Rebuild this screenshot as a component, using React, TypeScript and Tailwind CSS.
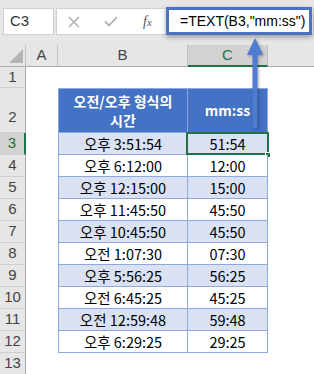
import React from "react";

const data: [string, string][] = [
  ["오후 3:51:54", "51:54"],
  ["오후 6:12:00", "12:00"],
  ["오후 12:15:00", "15:00"],
  ["오후 11:45:50", "45:50"],
  ["오후 10:45:50", "45:50"],
  ["오전 1:07:30", "07:30"],
  ["오후 5:56:25", "56:25"],
  ["오전 6:45:25", "45:25"],
  ["오전 12:59:48", "59:48"],
  ["오후 6:29:25", "29:25"],
];

const cellFont = { fontFamily: '"Noto Sans CJK KR", "Noto Sans", sans-serif' };

function RowHead({ n, sel }: { n: number; sel?: boolean }) {
  return (
    <div
      className={
        "flex items-center justify-center border-b border-[#cfcfcf] text-[15px] " +
        (sel
          ? "bg-[#d2d2d2] text-[#1e7145] border-r-2 border-r-[#217346]"
          : "bg-[#e6e6e6] text-[#444] border-r border-r-[#ababab]")
      }
      style={{ fontFamily: '"Liberation Sans", Arial, sans-serif' }}
    >
      {n}
    </div>
  );
}

export default function App() {
  return (
    <div
      className="relative w-[314px] h-[374px] overflow-hidden bg-[#e6e6e6]"
      style={{ fontFamily: '"Liberation Sans", Arial, sans-serif' }}
    >
      {/* formula bar */}
      <div className="flex h-[45px] items-start pt-[8px] pl-[3px] gap-[2px]">
        <div className="w-[51px] h-[27px] bg-white border border-[#d0d0d0] flex items-center pl-[6px] text-[15px] text-[#333]">
          C3
        </div>
        <div className="flex-1 h-[27px] bg-white border border-[#d0d0d0] flex items-center pl-[11px] gap-[24px]">
          <svg width="12" height="12" viewBox="0 0 12 12">
            <path d="M1 1 L11 11 M11 1 L1 11" stroke="#b0b0b0" strokeWidth="1.5" fill="none" />
          </svg>
          <svg width="14" height="11" viewBox="0 0 14 11">
            <path d="M1 5.5 L5 9.5 L13 1" stroke="#b0b0b0" strokeWidth="1.8" fill="none" />
          </svg>
          <span
            className="text-[14px] italic text-[#555] ml-[1px]"
            style={{ fontFamily: '"Liberation Serif", "Times New Roman", serif' }}
          >
            f<span className="text-[11px]">x</span>
          </span>
        </div>
      </div>

      {/* sheet */}
      <div className="grid grid-cols-[26px_32px_130px_80px_1fr] grid-rows-[22px_21px_45px_repeat(11,22px)] bg-white">
        {/* column header row */}
        <div className="relative bg-[#e6e6e6] border-r border-[#c0c0c0] border-b border-b-[#ababab]">
          <svg className="absolute left-[9px] top-[4px]" width="14" height="14" viewBox="0 0 14 14">
            <path d="M0 14 L14 14 L14 0 Z" fill="#b5b5b5" />
          </svg>
        </div>
        <div className="bg-[#e6e6e6] border-r border-[#c0c0c0] border-b border-b-[#ababab] flex items-center justify-center text-[15px] text-[#444]">
          A
        </div>
        <div className="bg-[#e6e6e6] border-r border-[#c0c0c0] border-b border-b-[#ababab] flex items-center justify-center text-[15px] text-[#444]">
          B
        </div>
        <div className="bg-[#d2d2d2] border-r border-[#c0c0c0] border-b-2 border-b-[#217346] flex items-center justify-center text-[15px] text-[#1e7145]">
          C
        </div>
        <div className="bg-[#e6e6e6] border-b border-b-[#ababab]" />

        {/* row 1 */}
        <RowHead n={1} />
        <div />
        <div />
        <div />
        <div />

        {/* row 2 header */}
        <div className="bg-[#e6e6e6] border-b border-[#cfcfcf] border-r border-r-[#ababab] flex items-end justify-center pb-[4px] text-[15px] text-[#444]">
          2
        </div>
        <div />
        <div
          className="bg-[#4472c4] border border-[#8ea9db] flex flex-col items-center justify-center text-white font-bold text-[14px] leading-[19px]"
          style={cellFont}
        >
          <span>오전/오후 형식의</span>
          <span>시간</span>
        </div>
        <div
          className="bg-[#4472c4] border-y border-r border-[#8ea9db] flex items-center justify-center text-white font-bold text-[14px]"
          style={cellFont}
        >
          mm:ss
        </div>
        <div />

        {data.map(([b, c], i) => {
          const n = i + 3;
          const bg = i % 2 === 0 ? "bg-[#d9e1f2]" : "bg-white";
          return (
            <React.Fragment key={n}>
              <RowHead n={n} sel={n === 3} />
              <div />
              <div
                className={`${bg} border-l border-r border-b border-[#8ea9db] flex items-center justify-center text-[14.5px] text-black`}
                style={cellFont}
              >
                {b}
              </div>
              <div
                className={`${bg} relative border-r border-b border-[#8ea9db] flex items-center justify-center text-[14.5px] text-black`}
                style={cellFont}
              >
                {c}
                {n === 3 && (
                  <>
                    <div className="absolute left-[-2px] top-[-1px] right-[-2px] bottom-[-1px] border-2 border-[#217346]" />
                    <div className="absolute right-[-4px] bottom-[-4px] w-[6px] h-[6px] bg-[#217346] border border-white" />
                  </>
                )}
              </div>
              <div />
            </React.Fragment>
          );
        })}
        <RowHead n={13} />
        <div />
        <div />
        <div />
        <div />
      </div>

      {/* highlighted formula overlay */}
      <div className="absolute left-[166px] top-[7px] w-[146px] h-[28px] bg-white border-[3px] border-[#4a74c2] shadow-[0_2px_5px_rgba(0,0,0,0.35)] flex items-center pl-[11px] text-[14px] text-black">
        =TEXT(B3,"mm:ss")
      </div>

      {/* arrow */}
      <svg
        className="absolute left-[243px] top-[36px]"
        width="24"
        height="96"
        viewBox="0 0 24 96"
        style={{ filter: "drop-shadow(1px 1px 1.5px rgba(0,0,0,0.35))" }}
      >
        <path d="M12 2 L20 19 L14.5 19 L14.5 90 Q14.5 92.5 12 92.5 Q9.5 92.5 9.5 90 L9.5 19 L4 19 Z" fill="#4d7cd0" />
      </svg>
    </div>
  );
}
